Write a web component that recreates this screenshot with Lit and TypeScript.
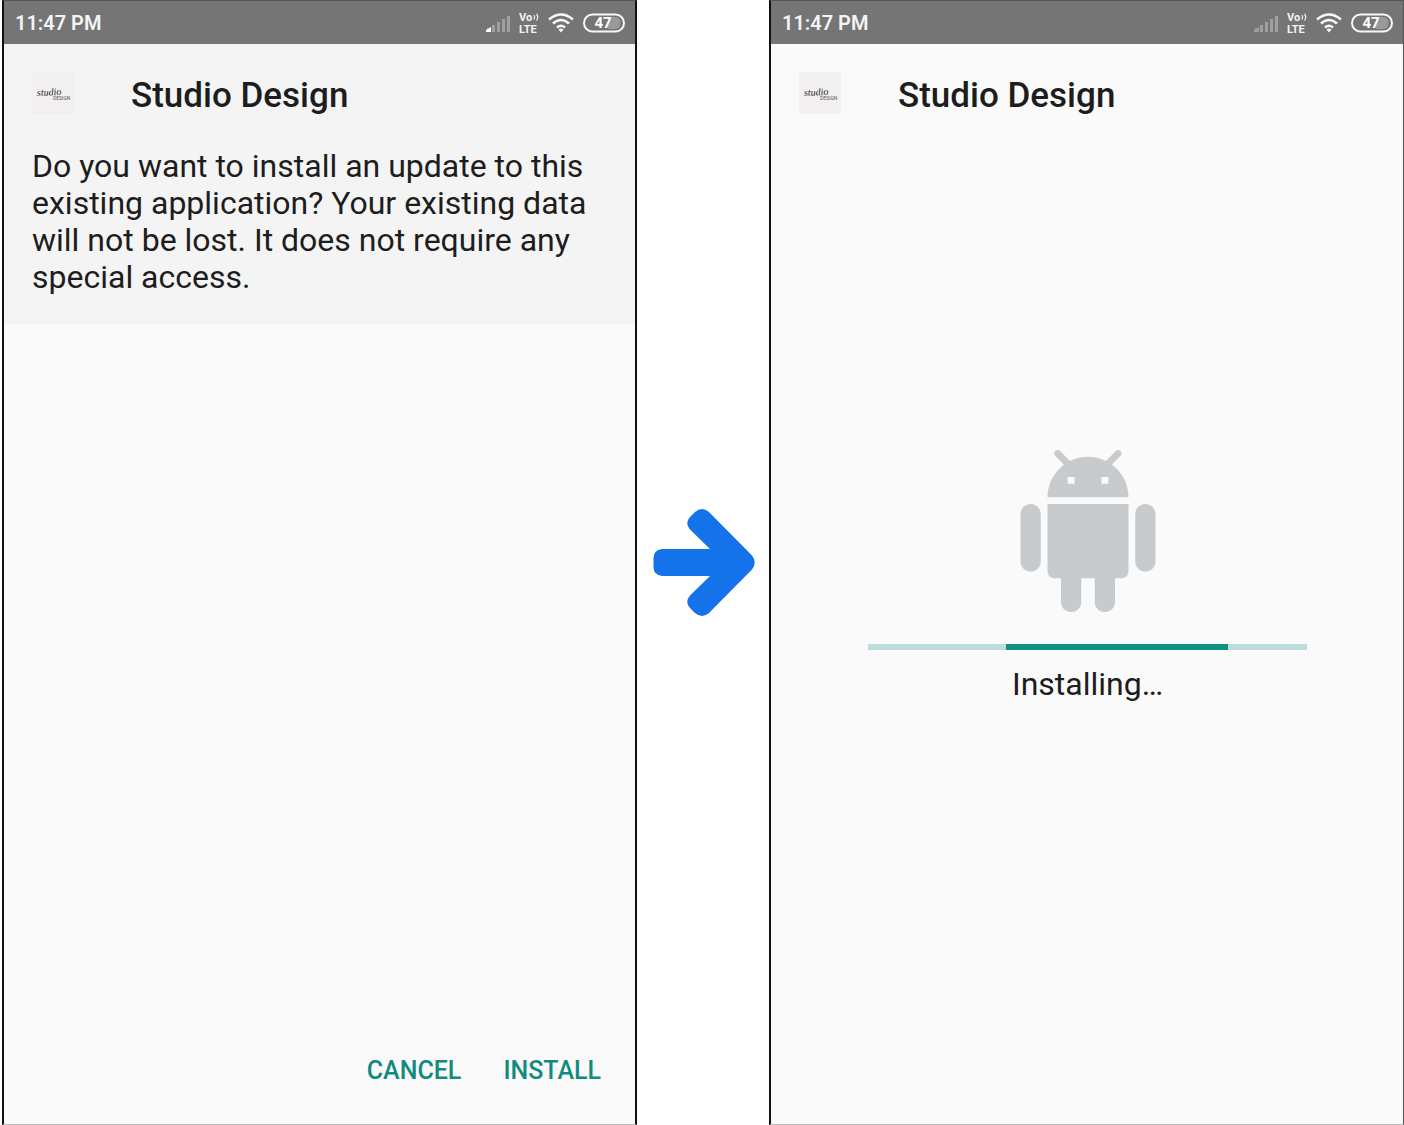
import { LitElement, html, css, svg } from "lit";
import { customElement, property } from "lit/decorators.js";

@customElement("status-bar")
class StatusBar extends LitElement {
  @property({ type: Boolean }) weak = false;

  static styles = css`
    :host {
      display: flex;
      align-items: center;
      justify-content: space-between;
      height: 43px;
      padding: 0 9px 0 11px;
      background: #757575;
      color: #f4f4f4;
    }
    .time {
      font-size: 20px;
      font-weight: 600;
      line-height: 24px;
    }
    .icons {
      display: flex;
      align-items: center;
      gap: 8px;
    }
    svg {
      display: block;
    }
    .volte {
      font: 700 11px Roboto, sans-serif;
      fill: #f4f4f4;
    }
    .battery-text {
      font: 700 15px Roboto, sans-serif;
      fill: #ffffff;
    }
  `;

  render() {
    const bars = [0, 1, 2, 3, 4].map(
      (i) => svg`<rect x=${1 + i * 5} y=${15 - i * 3} width="3" height=${4 + i * 3} fill="#a0a0a0"/>`
    );
    return html`
      <span class="time">11:47 PM</span>
      <div class="icons">
        <svg width="24" height="20" viewBox="0 0 24 20" role="img" aria-label="Signal">
          ${bars}
          <path d="M0 19V17L5 14V19Z" fill=${this.weak ? "#a0a0a0" : "#ffffff"} />
        </svg>
        <svg width="22" height="26" viewBox="0 0 22 26" role="img" aria-label="VoLTE">
          <text class="volte" x="1" y="11">Vo</text>
          <text class="volte" x="1" y="23">LTE</text>
          <path d="M16 5Q17.500 7 16 9.500M18.500 4Q21 7 18.500 10.500" fill="none" stroke="#f4f4f4" stroke-width="1.200" />
        </svg>
        <svg width="26" height="20" viewBox="0 0 26 20" role="img" aria-label="Wi-Fi">
          <g fill="none" stroke="#f8f8f8" stroke-width="2.600">
            <path d="M1 6.500Q13 -3.500 25 6.500" />
            <path d="M5 10.500Q13 3.500 21 10.500" />
            <path d="M9 14.500Q13 11 17 14.500" />
          </g>
          <path d="M10.500 16.500Q13 14.500 15.500 16.500L13 19.500Z" fill="#f8f8f8" />
        </svg>
        <svg width="44" height="20" viewBox="0 0 44 20" role="img" aria-label="Battery">
          <path d="M26 4H33Q38.500 4.500 38.500 10T33 16H26Z" fill="#9a9a9a" />
          <rect x="2" y="1.500" width="40" height="17" rx="8.500" fill="none" stroke="#f8f8f8" stroke-width="2" />
          <text class="battery-text" x="21" y="15" text-anchor="middle">47</text>
        </svg>
      </div>
    `;
  }
}

@customElement("app-header")
class AppHeader extends LitElement {
  static styles = css`
    :host {
      display: flex;
      align-items: flex-start;
      gap: 57px;
      padding: 28px 28px 0;
    }
    svg {
      display: block;
      flex: none;
    }
    .script {
      font: italic 10px "Liberation Serif", serif;
      fill: #222222;
    }
    .sub {
      font: 5px Roboto, sans-serif;
      fill: #555555;
    }
    h1 {
      margin: 0;
      font-size: 35px;
      font-weight: 500;
      line-height: 48px;
    }
  `;

  render() {
    return html`
      <svg width="42" height="42" viewBox="0 0 42 42" role="img" aria-label="Studio Design logo">
        <rect width="42" height="42" fill="#f1efef" />
        <text class="script" x="5" y="24" transform="rotate(-3 5 24)">studio</text>
        <text class="sub" x="21" y="28">DESIGN</text>
      </svg>
      <h1>Studio Design</h1>
    `;
  }
}

@customElement("app-root")
class AppRoot extends LitElement {
  static styles = css`
    :host {
      display: grid;
      grid-template-columns: minmax(0, 1fr) 132px minmax(0, 1fr);
      box-sizing: border-box;
      min-height: 100vh;
      padding-left: 2px;
      background: #ffffff;
      color: #1d1d1d;
      font-family: Roboto, sans-serif;
    }
    .phone {
      display: flex;
      flex-direction: column;
      background: #fafafa;
      border: 2px solid #101010;
      border-top: 1px solid #555555;
      border-bottom: 1px solid #bbbbbb;
    }
    .installing {
      border-right: 1px solid #555555;
    }
    .prompt {
      padding-bottom: 28px;
      background: #f4f4f4;
    }
    .message {
      margin: 0;
      padding: 28px 28px 0;
      font-size: 32px;
      line-height: 37px;
    }
    .actions {
      display: flex;
      justify-content: flex-end;
      gap: 42px;
      margin-top: auto;
      padding: 0 34px 38px;
    }
    button {
      padding: 0;
      border: 0;
      background: none;
      color: #128b7e;
      font: 500 25px/30px Roboto, sans-serif;
      text-transform: uppercase;
      cursor: pointer;
    }
    .arrow {
      display: flex;
      align-items: center;
      justify-content: center;
      padding-left: 2px;
    }
    svg {
      display: block;
    }
    .body {
      display: flex;
      flex: 1;
      flex-direction: column;
      align-items: center;
      justify-content: center;
      padding: 0 96px 92px 97px;
    }
    .track {
      align-self: stretch;
      height: 6px;
      margin: 32px 0 16px;
      background: #bbdeda;
    }
    .bar {
      height: 100%;
      background: #0f9082;
    }
    .label {
      margin: 0;
      font-size: 32px;
      line-height: 37px;
    }
  `;

  render() {
    return html`
      <section class="phone">
        <status-bar></status-bar>
        <div class="prompt">
          <app-header></app-header>
          <p class="message">
            Do you want to install an update to this existing application? Your existing data will
            not be lost. It does not require any special access.
          </p>
        </div>
        <div class="actions">
          <button type="button">Cancel</button>
          <button type="button">Install</button>
        </div>
      </section>
      <div class="arrow">
        <svg width="102" height="108" viewBox="0 0 102 108" aria-hidden="true">
          <path
            fill="#1473ea"
            d="M9 40H57L37 20.500Q31.500 14 37 8L42 3Q49 -3 56 3L99 46.500Q104.500 53.500 99 60.500L56 104Q49 110 42 104L37 99Q31.500 93 37 86.500L57 67H9Q0.500 66 0.500 58V49Q0.500 41 9 40Z"
          />
        </svg>
      </div>
      <section class="phone installing">
        <status-bar weak></status-bar>
        <app-header></app-header>
        <div class="body">
          <svg width="162" height="162" viewBox="0 0 24 24" role="img" aria-label="Android">
            <path
              fill="#c8cbce"
              d="M6 18c0 .55.45 1 1 1h1v3.500c0 .83.67 1.500 1.500 1.500s1.500-.67 1.500-1.500V19h2v3.500c0 .83.67 1.500 1.500 1.500s1.500-.67 1.500-1.500V19h1c.55 0 1-.45 1-1V8H6v10zM3.500 8C2.670 8 2 8.670 2 9.500v7c0 .83.67 1.500 1.500 1.500S5 17.330 5 16.500v-7C5 8.670 4.330 8 3.500 8zm17 0c-.83 0-1.500.67-1.500 1.500v7c0 .83.67 1.500 1.500 1.500s1.500-.67 1.500-1.500v-7c0-.83-.67-1.500-1.500-1.500zm-4.970-5.840l1.300-1.300c.2-.2.2-.51 0-.71-.2-.2-.51-.2-.71 0l-1.480 1.480C13.850 1.230 12.950 1 12 1c-.96 0-1.860.23-2.660.63L7.850.15c-.2-.2-.51-.2-.71 0-.2.2-.2.51 0 .71l1.310 1.310C6.970 3.260 6 5.010 6 7h12c0-1.990-.97-3.750-2.470-4.840zM10 5H9V4h1v1zm5 0h-1V4h1v1z"
            />
          </svg>
          <div class="track" role="progressbar" aria-labelledby="progress-label">
            <div class="bar" style="margin-left:31.4%;width:50.6%"></div>
          </div>
          <p class="label" id="progress-label">Installing…</p>
        </div>
      </section>
    `;
  }
}
